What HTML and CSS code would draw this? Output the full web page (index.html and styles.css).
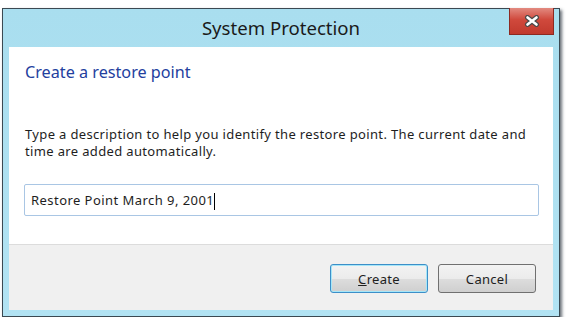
FILE: index.html
```html
<!DOCTYPE html>
<html lang="en">
<head>
    <meta charset="utf-8">
    <title>System Protection</title>
    <link rel="stylesheet" href="styles.css">
</head>
<body>
    <!-- 对话框窗口 -->
    <div class="window">
        <div class="titlebar">
            <span class="title">System Protection</span>
            <button class="close-btn" aria-label="Close">
                <svg width="16" height="12" viewBox="0 0 16 12">
                    <path d="M3.5 2.5 L12.5 9.5 M12.5 2.5 L3.5 9.5" stroke="#4a4a4a" stroke-width="5" stroke-linecap="round"/>
                    <path d="M3.5 2.5 L12.5 9.5 M12.5 2.5 L3.5 9.5" stroke="#ffffff" stroke-width="2.6" stroke-linecap="round"/>
                </svg>
            </button>
        </div>

        <div class="dialog-body">
            <h1 class="heading">Create a restore point</h1>
            <p class="desc">Type a description to help you identify the restore point. The current date and time are added automatically.</p>
            <div class="text-input">Restore Point March 9, 2001<span class="caret"></span></div>
        </div>

        <div class="dialog-footer">
            <button class="btn btn-default"><u>C</u>reate</button>
            <button class="btn">Cancel</button>
        </div>
    </div>
</body>
</html>
```

FILE: styles.css
```css
body {
    margin: 0;
    background: #ffffff;
    font-family: "Noto Sans", "Open Sans", sans-serif;
}

/* 窗口外框 */
.window {
    margin: 8px 0 0 2px;
    width: 558px;
    height: 309px;
    box-sizing: border-box;
    border: 1px solid #3b4952;
    background: linear-gradient(to bottom, #a9deef, #b2e3f3);
    box-shadow: 2px 2px 3px rgba(40, 50, 60, 0.7);
    padding: 0 6px 6px 6px;
    display: flex;
    flex-direction: column;
}

.titlebar {
    position: relative;
    height: 38px;
    display: flex;
    align-items: center;
    justify-content: center;
}

.title {
    font-size: 18.6px;
    color: #1a1a1a;
    margin-top: -2px;
}

.close-btn {
    position: absolute;
    top: -1px;
    right: -1px;
    width: 45px;
    height: 27px;
    padding: 0;
    border: 1px solid #8c2a22;
    border-top: none;
    background: linear-gradient(to bottom, #e28a80 0%, #d0493c 45%, #c13a2e 100%);
    display: flex;
    align-items: center;
    justify-content: center;
}

/* 白色内容区 */
.dialog-body {
    background: #ffffff;
    height: 197px;
    padding: 0 15px 0 15px;
    border-bottom: 1px solid #dcdcdc;
}

.heading {
    margin: 14px 0 0 1px;
    font-weight: normal;
    font-size: 16.2px;
    color: #23409e;
}

.desc {
    margin: 43px 0 0 1px;
    font-size: 13px;
    letter-spacing: 0.35px;
    line-height: 17px;
    color: #1e1e1e;
}

.text-input {
    margin-top: 24px;
    height: 30px;
    border: 1px solid #a9c6e4;
    border-radius: 2px;
    padding-left: 6px;
    font-size: 13px;
    letter-spacing: 0.45px;
    line-height: 30px;
    color: #1e1e1e;
    margin-right: -1px;
}

.caret {
    display: inline-block;
    width: 0;
    height: 17px;
    border-left: 1px solid #000;
    vertical-align: middle;
    margin-left: 0;
}

/* 底部按钮栏 */
.dialog-footer {
    flex: 1;
    background: #f0f0f0;
    display: flex;
    justify-content: flex-end;
    align-items: flex-start;
    gap: 10px;
    padding: 19px 17px 0 0;
}

.btn {
    width: 98px;
    height: 29px;
    border: 1px solid #707070;
    border-radius: 3px;
    background: linear-gradient(to bottom, #f3f3f3 0%, #ebebeb 50%, #dddddd 51%, #cfcfcf 100%);
    font-family: "Noto Sans", "Open Sans", sans-serif;
    font-size: 13px;
    letter-spacing: 0.3px;
    color: #1e1e1e;
    padding: 0;
}

.btn-default {
    border-color: #3c8fc8;
    box-shadow: inset 0 0 0 1px #a6e6f8;
}
```
